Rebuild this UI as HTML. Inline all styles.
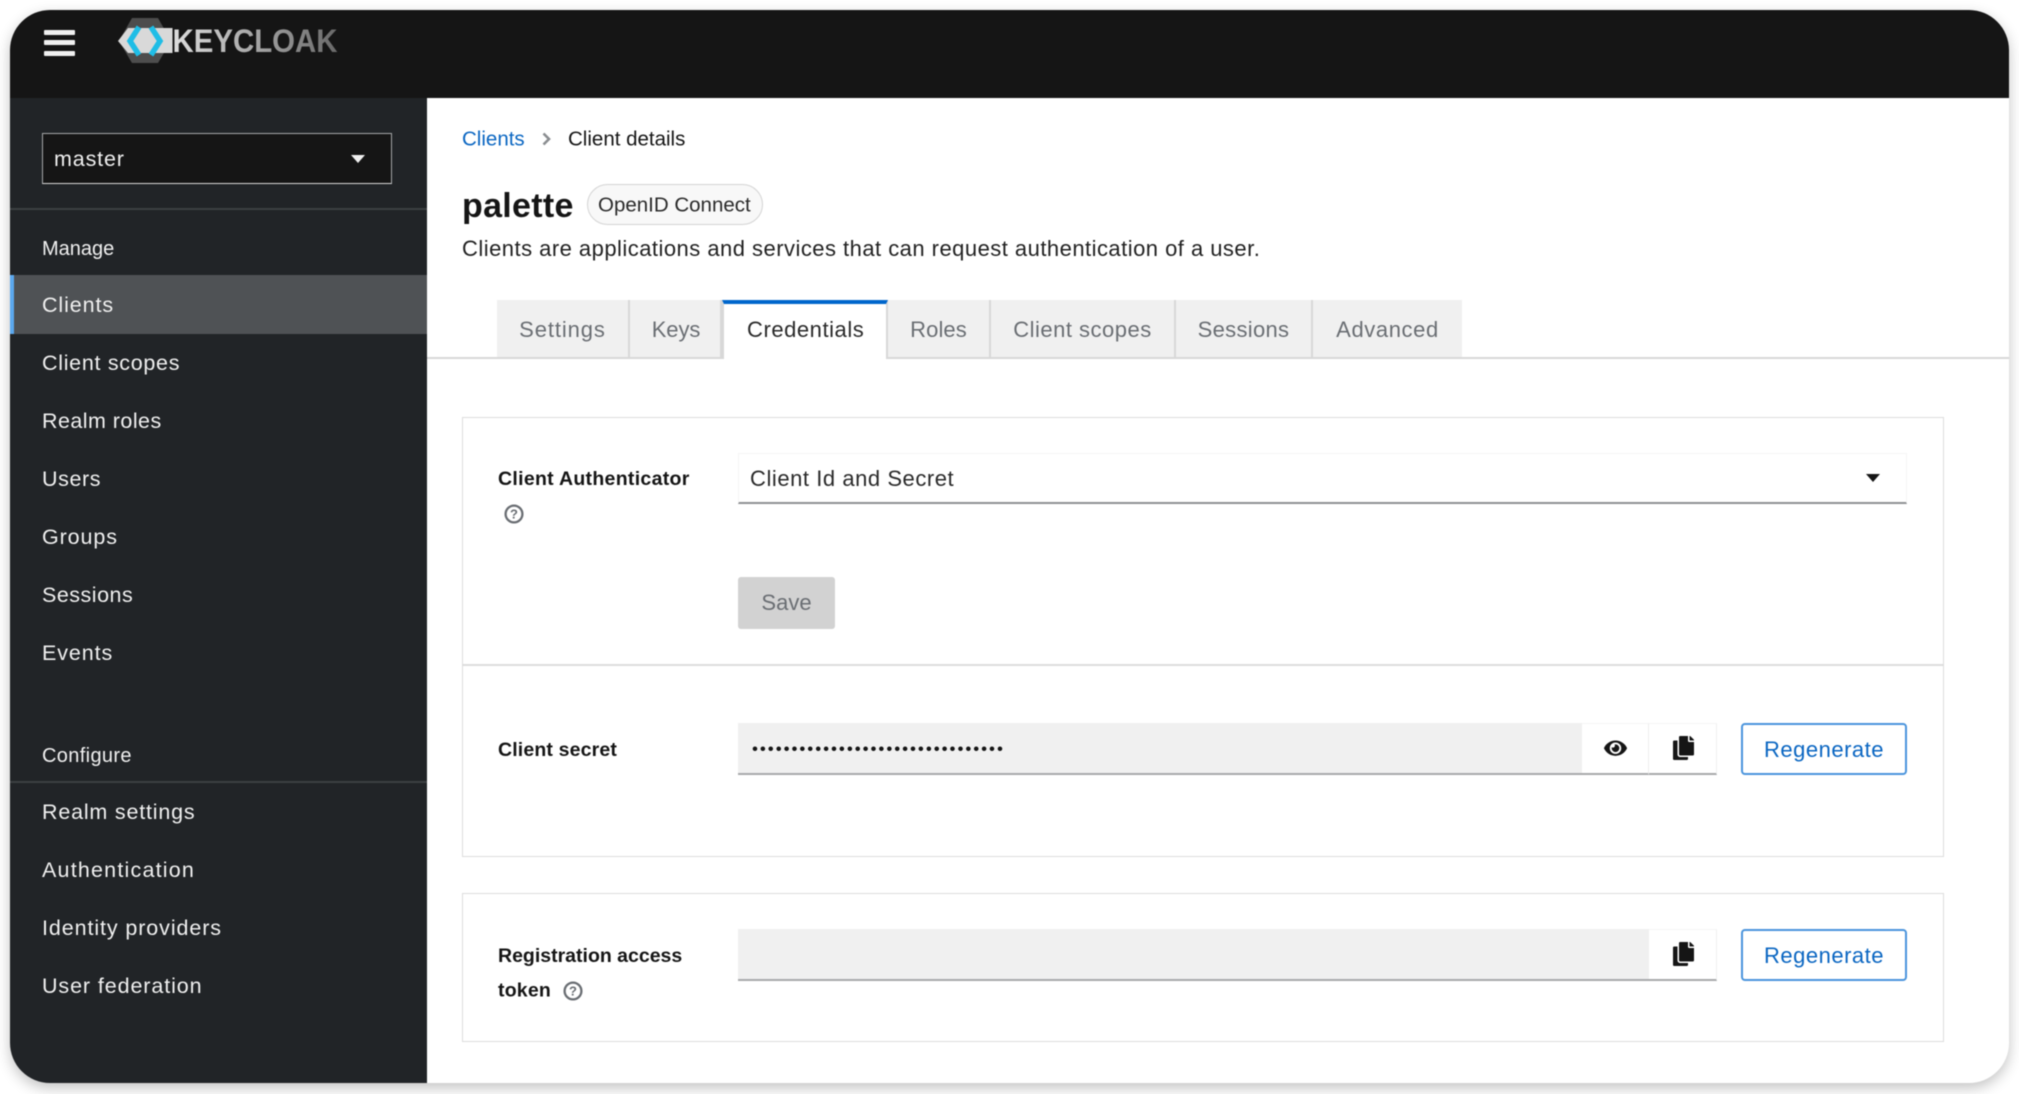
<!DOCTYPE html>
<html lang="en">
<head>
<meta charset="utf-8">
<title>Keycloak - Client details</title>
<style>
html,body{margin:0;padding:0;width:2019px;height:1094px;background:#fff;overflow:hidden}
body{font-family:"Liberation Sans",sans-serif;color:#151515}
#frame{position:absolute;left:10px;top:10px;width:1999px;height:1073px;border-radius:40px;background:#fff;box-shadow:0 5px 14px rgba(0,0,0,.24);overflow:hidden;filter:blur(.45px)}
#in{position:absolute;left:-10px;top:-10px;width:2019px;height:1094px}
.b{position:absolute;box-sizing:border-box}
.t{position:absolute;white-space:nowrap;line-height:1;transform:translateY(calc(-50% + .9px));font-size:21.5px}
.s{color:#f0f0f0}
.tab{position:absolute;top:300px;height:57px;box-sizing:border-box;background:#f0f0f0;border-right:2px solid #d8d8d8;color:#6a6e73;font-size:22px;text-align:center;line-height:60px;white-space:nowrap}
.l{font-weight:bold;font-size:19.5px}
.btn{position:absolute;left:1741px;width:166px;height:52px;box-sizing:border-box;border:2px solid #4a94dc;border-radius:4px;color:#0a66c2;font-size:22px;letter-spacing:.5px;text-align:center;line-height:49px;background:#fff}
svg{position:absolute;display:block}
</style>
</head>
<body>
<div id="frame"><div id="in">

<!-- header -->
<div class="b" style="left:0;top:0;width:2019px;height:97.5px;background:#151515"></div>
<div class="b" style="left:44px;top:29.5px;width:31px;height:5px;background:#f0f0f0;border-radius:1px"></div>
<div class="b" style="left:44px;top:40px;width:31px;height:5px;background:#f0f0f0;border-radius:1px"></div>
<div class="b" style="left:44px;top:50.5px;width:31px;height:5px;background:#f0f0f0;border-radius:1px"></div>

<svg style="left:110px;top:10px" width="240" height="60" viewBox="110 10 240 60">
  <defs>
    <linearGradient id="g" x1="172" x2="337" y1="0" y2="0" gradientUnits="userSpaceOnUse">
      <stop offset="0" stop-color="#dedede"/>
      <stop offset=".45" stop-color="#acacac"/>
      <stop offset="1" stop-color="#6a6a6a"/>
    </linearGradient>
  </defs>
  <polygon points="132,18 158,18 171,41 158,63 132,63 119,41" fill="#4d4d4d"/>
  <polygon points="118,41 128,28 172.5,28 172.5,53 128,53" fill="#d9d9d9"/>
  <polyline points="139,27 130,41 139,55" fill="none" stroke="#1fbde6" stroke-width="5.5"/>
  <polyline points="151,27 160,41 151,55" fill="none" stroke="#1fbde6" stroke-width="5.5"/>
  <text x="172.5" y="52" font-family="Liberation Sans" font-weight="bold" font-size="32" fill="url(#g)" textLength="165" lengthAdjust="spacingAndGlyphs">KEYCLOAK</text>
</svg>

<!-- sidebar -->
<div class="b" style="left:0;top:97.5px;width:427px;height:997px;background:#212427"></div>
<div class="b" style="left:42px;top:132.5px;width:350px;height:51.5px;background:#151515;border:1.5px solid #a5a7a9;border-bottom-color:#d8d8d8"></div>
<div class="t s" style="left:54px;top:159px;letter-spacing:.85px">master</div>
<svg style="left:351px;top:155px" width="14" height="8" viewBox="0 0 14 8"><polygon points="0,0 14,0 7,8" fill="#f0f0f0"/></svg>
<div class="b" style="left:0;top:208px;width:427px;height:1.5px;background:#3c3f42"></div>
<div class="t s" style="left:42px;top:248px;font-size:20px">Manage</div>

<div class="b" style="left:0;top:275px;width:427px;height:59px;background:#4f5255"></div>
<div class="b" style="left:10px;top:275px;width:4px;height:59px;background:#5ba8ee"></div>
<div class="t s" style="left:42px;top:305px;letter-spacing:.9px">Clients</div>
<div class="t s" style="left:42px;top:363px;letter-spacing:.7px">Client scopes</div>
<div class="t s" style="left:42px;top:421px;letter-spacing:.45px">Realm roles</div>
<div class="t s" style="left:42px;top:479px;letter-spacing:.6px">Users</div>
<div class="t s" style="left:42px;top:537px;letter-spacing:.9px">Groups</div>
<div class="t s" style="left:42px;top:595px;letter-spacing:.5px">Sessions</div>
<div class="t s" style="left:42px;top:653px;letter-spacing:.9px">Events</div>
<div class="t s" style="left:42px;top:755px;font-size:20px;letter-spacing:.35px">Configure</div>
<div class="b" style="left:0;top:781px;width:427px;height:1.5px;background:#3c3f42"></div>
<div class="t s" style="left:42px;top:812px;letter-spacing:.8px">Realm settings</div>
<div class="t s" style="left:42px;top:870px;letter-spacing:1.2px">Authentication</div>
<div class="t s" style="left:42px;top:928px;letter-spacing:.9px">Identity providers</div>
<div class="t s" style="left:42px;top:986px;letter-spacing:.9px">User federation</div>

<!-- breadcrumb & title -->
<div class="t" style="left:462px;top:139px;font-size:20.5px;color:#0a66c2">Clients</div>
<svg style="left:542px;top:132px" width="9" height="14" viewBox="0 0 9 14"><polyline points="1.5,1.5 7,7 1.5,12.5" fill="none" stroke="#8a8d90" stroke-width="2.6"/></svg>
<div class="t" style="left:568px;top:139px;font-size:20.5px">Client details</div>

<div class="t" style="left:462px;top:205px;font-size:34px;font-weight:bold;letter-spacing:.3px">palette</div>
<div class="b" style="left:587px;top:184px;width:176px;height:41px;border:1.5px solid #d4d4d4;border-radius:21px;background:#f8f8f8"></div>
<div class="t" style="left:598px;top:205px;font-size:20.5px;color:#2a2a2a">OpenID Connect</div>
<div class="t" style="left:462px;top:248px;font-size:22px;letter-spacing:.47px;color:#222">Clients are applications and services that can request authentication of a user.</div>

<!-- tabs -->
<div class="b" style="left:427px;top:357px;width:1592px;height:1.5px;background:#d8d8d8"></div>
<div class="tab" style="left:497px;width:133px;letter-spacing:.9px">Settings</div>
<div class="tab" style="left:630px;width:92px;letter-spacing:-.1px;padding-left:2px">Keys</div>
<div class="b" style="left:722px;top:300px;width:166px;height:59px;background:#fff;border-left:2px solid #d8d8d8;border-right:2px solid #d8d8d8;border-top:4px solid #0066cc"></div>
<div class="t" style="left:747px;top:329px;font-size:22px;letter-spacing:.55px;color:#2a2a2a">Credentials</div>
<div class="tab" style="left:888px;width:103px;letter-spacing:.1px">Roles</div>
<div class="tab" style="left:991px;width:185px;letter-spacing:.5px">Client scopes</div>
<div class="tab" style="left:1176px;width:137px;letter-spacing:.3px">Sessions</div>
<div class="tab" style="left:1313px;width:149px;border-right:0;letter-spacing:.6px">Advanced</div>

<!-- card 1 -->
<div class="b" style="left:462px;top:417px;width:1482px;height:440px;border:1.5px solid #dcdcdc"></div>
<div class="b" style="left:462px;top:664px;width:1482px;height:1.5px;background:#dcdcdc"></div>
<div class="t l" style="left:498px;top:479px;letter-spacing:.3px">Client Authenticator</div>
<svg style="left:503.5px;top:504px" width="20" height="20" viewBox="0 0 20 20"><circle cx="10" cy="10" r="8.4" fill="none" stroke="#6a6e73" stroke-width="2.3"/><text x="10" y="14.6" text-anchor="middle" font-family="Liberation Sans" font-weight="bold" font-size="13" fill="#6a6e73">?</text></svg>

<div class="b" style="left:738px;top:453px;width:1169px;height:51px;background:#fff;border:1px solid #f5f5f5;border-bottom:2px solid #8f9193"></div>
<div class="t" style="left:750px;top:478px;font-size:22px;letter-spacing:.55px;color:#2a2a2a">Client Id and Secret</div>
<svg style="left:1866px;top:474px" width="14" height="8" viewBox="0 0 14 8"><polygon points="0,0 14,0 7,8" fill="#151515"/></svg>

<div class="b" style="left:738px;top:577px;width:97px;height:52px;background:#d2d2d2;border-radius:3px"></div>
<div class="t" style="left:738px;width:97px;text-align:center;top:603px;font-size:22px;color:#6a6e73;transform:translateY(-50%)">Save</div>

<!-- client secret -->
<div class="t l" style="left:498px;top:750px;letter-spacing:.15px">Client secret</div>
<div class="b" style="left:738px;top:723px;width:844px;height:52px;background:#f0f0f0;border-bottom:2px solid #a8a9ab"></div>
<div class="t" style="left:752px;top:749px;font-size:17px;letter-spacing:1.95px;color:#151515;transform:translateY(-50%)">••••••••••••••••••••••••••••••••</div>
<div class="b" style="left:1582px;top:723px;width:67px;height:52px;background:#fff;border-top:1px solid #f5f5f5;border-right:1px solid #eeeeee;border-bottom:2px solid #a8a9ab"></div>
<div class="b" style="left:1649px;top:723px;width:68px;height:52px;background:#fff;border-top:1px solid #f5f5f5;border-right:1px solid #f0f0f0;border-bottom:2px solid #a8a9ab"></div>
<svg style="left:1603.5px;top:738px" width="23" height="20.4" viewBox="0 0 576 512"><path fill="#151515" d="M572.52 241.4C518.29 135.59 410.93 64 288 64S57.68 135.64 3.48 241.41a32.35 32.35 0 0 0 0 29.19C57.71 376.41 165.07 448 288 448s230.32-71.64 284.52-177.41a32.35 32.35 0 0 0 0-29.19zM288 400a144 144 0 1 1 144-144 143.93 143.93 0 0 1-144 144zm0-240a95.31 95.31 0 0 0-25.31 3.79 47.85 47.85 0 0 1-66.9 66.9A95.78 95.78 0 1 0 288 160z"/></svg>
<svg style="left:1673px;top:736px" width="21" height="24" viewBox="0 0 448 512"><path fill="#151515" d="M320 448v40c0 13.255-10.745 24-24 24H24c-13.255 0-24-10.745-24-24V120c0-13.255 10.745-24 24-24h72v296c0 30.879 25.121 56 56 56h168zm0-344V0H152c-13.255 0-24 10.745-24 24v368c0 13.255 10.745 24 24 24h272c13.255 0 24-10.745 24-24V128H344c-13.2 0-24-10.8-24-24zm120.971-31.029L375.029 7.029A24 24 0 0 0 358.059 0H352v96h96v-6.059a24 24 0 0 0-7.029-16.97z"/></svg>
<div class="btn" style="top:723px">Regenerate</div>

<!-- card 3 -->
<div class="b" style="left:462px;top:893px;width:1482px;height:149px;border:1.5px solid #dcdcdc"></div>
<div class="t l" style="left:498px;top:956px">Registration access</div>
<div class="t l" style="left:498px;top:991px;letter-spacing:.2px;transform:translateY(-50%)">token</div>
<svg style="left:563px;top:981px" width="20" height="20" viewBox="0 0 20 20"><circle cx="10" cy="10" r="8.4" fill="none" stroke="#6a6e73" stroke-width="2.3"/><text x="10" y="14.6" text-anchor="middle" font-family="Liberation Sans" font-weight="bold" font-size="13" fill="#6a6e73">?</text></svg>
<div class="b" style="left:738px;top:929px;width:911px;height:52px;background:#f0f0f0;border-bottom:2px solid #a8a9ab"></div>
<div class="b" style="left:1649px;top:929px;width:68px;height:52px;background:#fff;border-top:1px solid #f5f5f5;border-right:1px solid #f0f0f0;border-bottom:2px solid #a8a9ab"></div>
<svg style="left:1673px;top:942px" width="21" height="24" viewBox="0 0 448 512"><path fill="#151515" d="M320 448v40c0 13.255-10.745 24-24 24H24c-13.255 0-24-10.745-24-24V120c0-13.255 10.745-24 24-24h72v296c0 30.879 25.121 56 56 56h168zm0-344V0H152c-13.255 0-24 10.745-24 24v368c0 13.255 10.745 24 24 24h272c13.255 0 24-10.745 24-24V128H344c-13.2 0-24-10.8-24-24zm120.971-31.029L375.029 7.029A24 24 0 0 0 358.059 0H352v96h96v-6.059a24 24 0 0 0-7.029-16.97z"/></svg>
<div class="btn" style="top:929px">Regenerate</div>

</div></div>
</body>
</html>
